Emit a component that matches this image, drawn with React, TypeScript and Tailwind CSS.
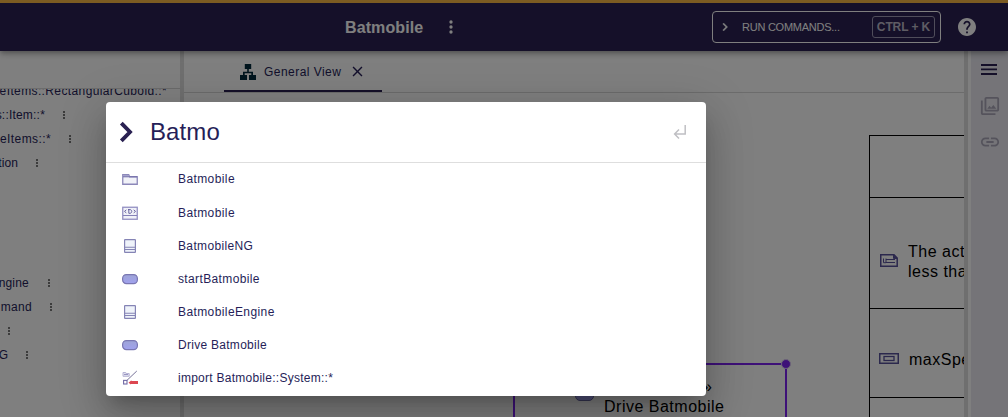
import React from "react";

const treeRows = [
  { label: "eItems::RectangularCuboid::*", box: "w-[167px]", tracking: "tracking-[0.38px]" },
  { label: "s::Item::*", box: "w-[45px]", tracking: "tracking-[0.2px]", dots: true },
  { label: "eItems::*", box: "w-[51px]", tracking: "tracking-[0.4px]", dots: true },
  { label: "tion", box: "w-[18px]", tracking: "tracking-[0.1px]", dots: true },
  { label: "", box: "w-0", tracking: "" },
  { label: "", box: "w-0", tracking: "" },
  { label: "", box: "w-0", tracking: "" },
  { label: "", box: "w-0", tracking: "" },
  { label: "ngine", box: "w-[29px]", tracking: "tracking-[0.2px]", dots: true, gap: true },
  { label: "mand", box: "w-[32px]", tracking: "tracking-[0.3px]", dots: true },
  { label: "", box: "w-0", tracking: "", near: true },
  { label: "G", box: "w-[8px]", tracking: "tracking-[0px]", dots: true },
];

function FolderIcon() {
  return (
    <svg width="16" height="16" viewBox="0 0 16 16" fill="none">
      <path d="M.75 13.25V3.75h6l.8 2h7.7v7.5z" fill="#f1f2f8" stroke="#8c88b9" strokeWidth="1.3" />
      <path d="M1 4h5.7l.7 1.7H1z" fill="#a5a3cc" />
      <path d="M1 5.8h14" stroke="#7470aa" />
    </svg>
  );
}

function DefinitionIcon() {
  return (
    <svg width="16" height="16" viewBox="0 0 16 16" fill="none">
      <rect x=".75" y="2.25" width="14.5" height="12" fill="#f0f1f8" stroke="#9390c2" strokeWidth="1.3" />
      <path d="M1 10.5h14" stroke="#8581b8" strokeWidth="1.2" />
      <path d="M4.3 4.9 2.5 6.4l1.8 1.5M11.7 4.9l1.8 1.5-1.8 1.5" stroke="#6864a0" />
      <path d="M6.8 4.6v3.7h1.3c2.2-.3 2.2-3.4 0-3.7H6z" stroke="#6864a0" />
    </svg>
  );
}

function PartIcon() {
  return (
    <svg width="16" height="16" viewBox="0 0 16 16" fill="none">
      <rect x="2.6" y="1.6" width="10.8" height="12.8" rx=".5" fill="#eff3fa" stroke="#8584b5" strokeWidth="1.2" />
      <path d="M3 9.2h10M3 11.5h10" stroke="#8584b5" strokeWidth="1.1" />
    </svg>
  );
}

function ActionIcon() {
  return (
    <svg width="16" height="16" viewBox="0 0 16 16">
      <defs>
        <linearGradient id="action" x2="0" y2="1">
          <stop stopColor="#9ea4d6" />
          <stop offset="1" stopColor="#a0a1ee" />
        </linearGradient>
      </defs>
      <rect x=".6" y="3.6" width="14.8" height="9" rx="3.8" fill="url(#action)" stroke="#7a77b2" strokeWidth="1.2" />
    </svg>
  );
}

function ImportIcon() {
  return (
    <svg width="16" height="16" viewBox="0 0 16 16" fill="none">
      <path d="M1 2.5h2.7l.5 1h3v2.8H1z" fill="#e1e1ef" stroke="#b6b3d4" />
      <path d="M2 4.5h4" stroke="#8682b4" strokeWidth=".8" />
      <path d="M4.8 10.5 14.8 1" stroke="#777399" />
      <rect x="1.6" y="10.4" width="3.4" height="3.6" fill="#fff" stroke="#716aa6" strokeWidth="1.1" />
      <path d="m6.5 12.7 2.9-2.4V11H16v3H9v.5z" fill="#dc4650" />
    </svg>
  );
}

const results: { label: string; icon: React.ReactNode; height: string; tracking: string }[] = [
  { label: "Batmobile", icon: <FolderIcon />, height: "h-[34px]", tracking: "tracking-[0.4px]" },
  { label: "Batmobile", icon: <DefinitionIcon />, height: "h-[33px]", tracking: "tracking-[0.4px]" },
  { label: "BatmobileNG", icon: <PartIcon />, height: "h-[33px]", tracking: "tracking-[0.35px]" },
  { label: "startBatmobile", icon: <ActionIcon />, height: "h-[33px]", tracking: "tracking-[0.37px]" },
  { label: "BatmobileEngine", icon: <PartIcon />, height: "h-[33px]", tracking: "tracking-[0.4px]" },
  { label: "Drive Batmobile", icon: <ActionIcon />, height: "h-[33px]", tracking: "tracking-[0.28px]" },
  { label: "import Batmobile::System::*", icon: <ImportIcon />, height: "h-[33px]", tracking: "tracking-[0.26px]" },
];

function MiniDots() {
  return (
    <svg className="block shrink-0" width="4" height="10" viewBox="0 0 4 10" fill="#787878">
      <path d="M1 1h2v2H1zM1 4h2v2H1zM1 7h2v2H1z" />
    </svg>
  );
}

function Header() {
  return (
    <header className="relative z-10 flex h-[51px] shrink-0 items-center border-t-[3px] border-[#f9b945] bg-[#2a2152] text-white shadow-[0_2px_4px_-1px_rgba(0,0,0,0.2),0_4px_5px_rgba(0,0,0,0.14),0_1px_10px_rgba(0,0,0,0.12)]">
      <div className="ml-[345px] w-[79px] whitespace-nowrap pt-px text-base leading-6 font-bold tracking-[0.1px]">Batmobile</div>
      <svg className="ml-[17px]" width="20" height="20" viewBox="0 0 24 24" fill="#fff">
        <path d="M12 8a2 2 0 1 0 0-4 2 2 0 0 0 0 4m0 2a2 2 0 1 0 0 4 2 2 0 0 0 0-4m0 6a2 2 0 1 0 0 4 2 2 0 0 0 0-4" />
      </svg>
      <div className="ml-auto flex h-8 w-[229px] items-center rounded border border-white pl-[4px] pr-[5px]">
        <svg className="shrink-0" width="16" height="16" viewBox="0 0 24 24" fill="#fff" stroke="#fff" strokeWidth=".5">
          <path d="M10 6 8.59 7.41 13.17 12l-4.58 4.59L10 18l6-6z" />
        </svg>
        <span className="ml-[9px] whitespace-nowrap text-[11px] tracking-[-0.25px]">RUN COMMANDS...</span>
        <span className="ml-auto flex h-[22px] w-[63px] items-center justify-center whitespace-nowrap rounded-[3px] border border-[#9f9ab5] text-xs font-bold tracking-[-0.1px] text-[#bcb9c8]">CTRL + K</span>
      </div>
      <svg className="ml-[17px] mr-[32px]" width="18" height="18" viewBox="2 2 20 20" fill="#fff">
        <path d="M12 2C6.48 2 2 6.48 2 12s4.48 10 10 10 10-4.48 10-10S17.52 2 12 2m1 17h-2v-2h2zm2.07-7.75-.9.92C13.45 12.9 13 13.5 13 15h-2v-.5c0-1.1.45-2.1 1.17-2.83l1.24-1.26c.37-.36.59-.86.59-1.41 0-1.1-.9-2-2-2s-2 .9-2 2H8c0-2.21 1.79-4 4-4s4 1.79 4 4c0 .88-.36 1.68-.93 2.25" />
      </svg>
    </header>
  );
}

function Explorer() {
  return (
    <aside className="flex w-[180px] shrink-0 flex-col">
      <div className="h-[38px] shrink-0 border-b border-[#d8d8d8]" />
      <div className="min-h-0 flex-1 overflow-hidden">
        <div className="-mt-[10px]">
          {treeRows.map((row, i) => (
            <div key={i} className="flex h-6 items-center">
              <div className={`flex shrink-0 justify-end whitespace-nowrap text-xs leading-5 ${row.tracking} ${row.box}`}>
                {row.label}
              </div>
              {row.dots && <span className={row.gap ? "ml-[18px]" : "ml-[17px]"}><MiniDots /></span>}
              {row.near && <span className="ml-[7px]"><MiniDots /></span>}
            </div>
          ))}
        </div>
      </div>
    </aside>
  );
}

function Diagram() {
  return (
    <div className="relative min-h-0 flex-1 overflow-hidden text-black">
      <div className="absolute left-[329px] top-[270px] h-[120px] w-[274px] border-2 border-[#7c22f0]" />
      <div className="absolute left-[597px] top-[266px] size-[10px] rounded-full border border-[#d8c8f0] bg-[#7c22f0]" />
      <div className="absolute left-[391px] top-[291px] h-[17px] w-[19px] rounded-[5px] border border-[#6d6aa8] bg-[#a0a1ee]" />
      <div className="absolute left-[463px] top-[284px] w-[60px] text-right text-base leading-5">«action&nbsp;»</div>
      <div className="absolute left-[420px] top-[304px] whitespace-nowrap text-base leading-5 tracking-[0.5px]">Drive Batmobile</div>
      <div className="absolute left-[685px] top-[42px] flex h-[400px] w-[240px] flex-col border border-black">
        <div className="h-[62px] shrink-0 border-b border-black" />
        <div className="flex h-[111px] shrink-0 items-center border-b border-black pt-[16px] pl-[10px]">
          <svg className="-mt-[2px]" width="18" height="13" viewBox="0 0 18 13" fill="none" stroke="#57509b">
            <path d="M.75.75H14L17.2 4v8.2H.75z" strokeWidth="1.5" />
            <path d="M6 5.5h9M3.5 4.5v4.2H6V4.5M6 8.5h9" />
            <path d="M13.5 1 17 4.4h-3.5z" fill="#57509b" />
          </svg>
          <p className="ml-[10px] pt-[2px] whitespace-nowrap text-base leading-5 tracking-[0.5px]">The actual mass shall be<br />less than the required</p>
        </div>
        <div className="flex h-[89px] shrink-0 items-center border-b border-black pt-[12px] pl-[9px]">
          <svg className="-mt-px" width="20" height="11" viewBox="0 0 20 11" fill="none" stroke="#57509b">
            <rect x=".75" y=".75" width="18.5" height="9.5" strokeWidth="1.5" />
            <rect x="5" y="3.5" width="10" height="4" strokeWidth="1.3" />
          </svg>
          <span className="ml-[10px] pt-[2px] text-base leading-5 tracking-[0.5px]">maxSpeed</span>
        </div>
      </div>
    </div>
  );
}

function Workbench() {
  return (
    <main className="flex w-[780px] shrink-0 flex-col overflow-hidden">
      <div className="flex h-[42px] shrink-0 border-b border-[#d8d8d8]">
        <div className="ml-[40px] flex h-[41px] w-[158px] items-center border-b-2 border-[#2a2152] pt-[2px] pl-4">
          <svg width="16" height="16" viewBox="0 0 16 16" fill="#002b3c">
            <path d="M4.8 0h6.4v5H8.8v2.7H13V11h3v5H9v-5h2.3V9.3H4.7V11H7v5H0v-5h3V7.7h4.2V5H4.8z" />
          </svg>
          <span className="ml-2 w-[79px] whitespace-nowrap text-xs tracking-[0.46px]">General View</span>
          <svg className="ml-[6px]" width="17" height="17" viewBox="0 0 24 24" fill="currentColor">
            <path d="M19 6.41 17.59 5 12 10.59 6.41 5 5 6.41 10.59 12 5 17.59 6.41 19 12 13.41 17.59 19 19 17.59 13.41 12z" />
          </svg>
        </div>
      </div>
      <Diagram />
    </main>
  );
}

function SideBar() {
  return (
    <nav className="ml-[3px] flex w-[37px] flex-col items-center bg-[#eae9f1]">
      <svg className="mt-[12px] mr-[1px]" width="16" height="13" viewBox="0 0 16 13" fill="#2a2152">
        <path d="M0 1h16v2H0zM0 5.5h16v1.7H0zM0 10h16v2H0z" />
      </svg>
      <svg className="mt-[20px] ml-[1px]" width="20" height="20" viewBox="1 1 22 22" fill="#aaa7b8">
        <path d="M20 4v12H8V4zm0-2H8c-1.1 0-2 .9-2 2v12c0 1.1.9 2 2 2h12c1.1 0 2-.9 2-2V4c0-1.1-.9-2-2-2m-8.5 9.67 1.69 2.26 2.48-3.1L19 15H9zM2 6v14c0 1.1.9 2 2 2h14v-2H4V6z" />
      </svg>
      <svg className="mt-[16px]" width="20" height="20" viewBox="1 1 22 22" fill="#aaa7b8">
        <path d="M3.9 12c0-1.71 1.39-3.1 3.1-3.1h4V7H7c-2.76 0-5 2.24-5 5s2.24 5 5 5h4v-1.9H7c-1.71 0-3.1-1.39-3.1-3.1M8 13h8v-2H8zm9-6h-4v1.9h4c1.71 0 3.1 1.39 3.1 3.1s-1.39 3.1-3.1 3.1h-4V17h4c2.76 0 5-2.24 5-5s-2.24-5-5-5" />
      </svg>
    </nav>
  );
}

function CommandPalette() {
  return (
    <section className="absolute left-[106px] top-[102px] z-30 h-[294px] w-[600px] overflow-hidden rounded bg-white shadow-[0_11px_15px_-7px_rgba(0,0,0,0.2),0_24px_38px_3px_rgba(0,0,0,0.14),0_9px_46px_8px_rgba(0,0,0,0.12)]">
      <div className="flex h-[61px] items-center border-b border-[#dedede] pl-[4px] pr-[19px]">
        <svg className="shrink-0" width="32" height="32" viewBox="0 0 24 24" fill="none" stroke="#2a2152" strokeWidth="2.9">
          <path d="m8.5 5.3 6.5 6.7-6.5 6.7" />
        </svg>
        <span className="ml-2 text-2xl tracking-[0.1px]">Batmo</span>
        <svg className="ml-auto" width="14" height="16" viewBox="0 0 14 16" fill="none" stroke="#bfbfc3" strokeWidth="1.5">
          <path d="M12.2 1v9H2M6 5.5 1.6 10 6 14.5" />
        </svg>
      </div>
      <ul className="-mt-px">
        {results.map((item, i) => (
          <li key={i} className={`flex items-center pl-4 text-xs ${item.tracking} ${item.height}`}>
            <span className="w-14">{item.icon}</span>
            {item.label}
          </li>
        ))}
      </ul>
    </section>
  );
}

export default function App() {
  return (
    <div className="relative flex h-[417px] w-[1008px] flex-col overflow-hidden bg-white font-['Liberation_Sans',Arial,sans-serif] text-[#261e58]">
      <Header />
      <div className="flex min-h-0 flex-1">
        <Explorer />
        <div className="w-1 shrink-0 bg-[#dedede]" />
        <Workbench />
        <div className="w-1 shrink-0 bg-[#dedede]" />
        <SideBar />
      </div>
      <div className="absolute inset-0 z-20 bg-black/50" />
      <CommandPalette />
    </div>
  );
}
